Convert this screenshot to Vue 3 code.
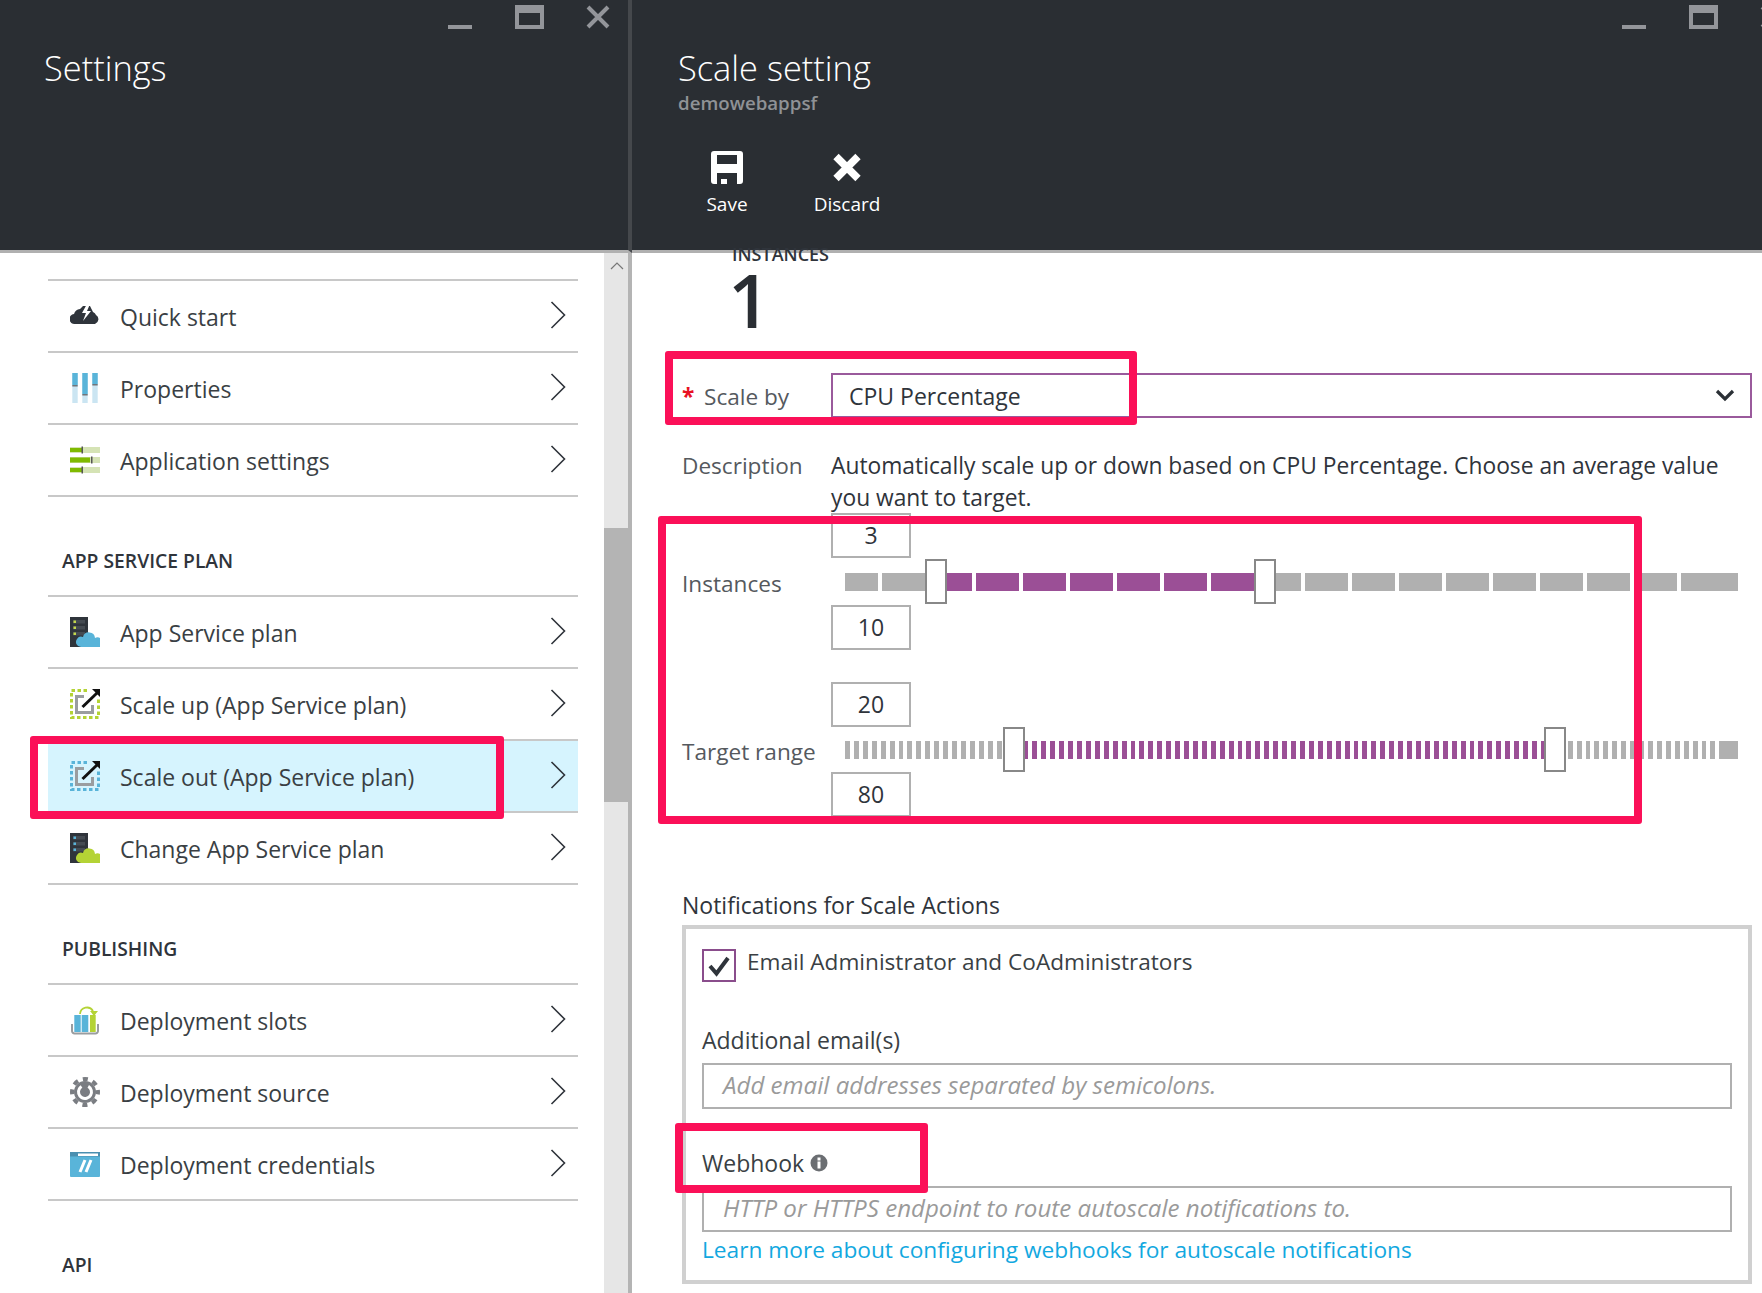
<template>
  <div class="page">
    <section class="blade settings">
      <header class="head">
        <div class="win-controls">
          <svg class="win-min" width="24" height="4"><rect width="24" height="4" fill="#93959a" /></svg>
          <svg class="win-max" width="29" height="24"><path d="M0 0h29v24H0z M4 8v12h21V8z" fill="#93959a" fill-rule="evenodd" /></svg>
          <svg class="win-close" width="24" height="24"><path d="M2 2l20 20M22 2L2 22" stroke="#93959a" stroke-width="4" /></svg>
        </div>
        <h1 class="title">Settings</h1>
      </header>
      <div class="settings-body">
        <div class="menu">
          <template v-for="group in groups" :key="group.title">
            <div v-if="group.title" class="menu-title">{{ group.title }}</div>
            <div class="menu-group">
              <div v-for="row in group.rows" :key="row.label" class="menu-row" :class="{ selected: row.selected }">
                <svg class="menu-icon" width="30" height="30" viewBox="0 0 30 30">
                  <template v-if="row.icon === 'quick'">
                    <path d="M5 23a5 5 0 0 1-1-10 7 7 0 0 1 6-5l3-3h7l3 6a5 5 0 0 1 3 3 5 5 0 0 1-1 9z" fill="#2f343b" />
                    <path d="M17 3l-5 9h4l-3 8 8-10h-4l3-7z" fill="#fff" />
                  </template>
                  <template v-else-if="row.icon === 'props'">
                    <rect x="2.300" width="5.400" height="30" fill="#cbe5f2" /><rect x="12.300" width="5.400" height="30" fill="#cbe5f2" /><rect x="22.300" width="5.400" height="30" fill="#cbe5f2" />
                    <rect x="2.300" width="5.400" height="12" fill="#59b4d9" /><rect x="12.300" width="5.400" height="21" fill="#59b4d9" /><rect x="22.300" width="5.400" height="11" fill="#59b4d9" />
                    <rect x="2.300" y="12" width="5.400" height="1.500" fill="#6f757b" /><rect x="12.300" y="21" width="5.400" height="1.500" fill="#6f757b" /><rect x="22.300" y="11" width="5.400" height="1.500" fill="#6f757b" />
                  </template>
                  <template v-else-if="row.icon === 'app'">
                    <rect y="2" width="30" height="6" fill="#d5e3b5" /><rect y="12" width="30" height="6" fill="#d5e3b5" /><rect y="22" width="30" height="6" fill="#d5e3b5" />
                    <rect y="3" width="12" height="4" fill="#7fba00" /><rect y="12.500" width="20" height="5" fill="#7fba00" /><rect y="23" width="12" height="4" fill="#7fba00" />
                    <rect x="11.500" y="1.500" width="1.500" height="7" fill="#555" /><rect x="21" y="11.500" width="1.500" height="7" fill="#555" /><rect x="11.500" y="21.500" width="1.500" height="7" fill="#555" />
                  </template>
                  <template v-else-if="row.icon === 'plan' || row.icon === 'change'">
                    <rect width="18" height="30" fill="#2f343b" />
                    <rect x="3" y="3" width="12" height="3.500" fill="#454b52" /><rect x="3" y="9" width="12" height="3.500" fill="#454b52" /><rect x="3" y="15" width="12" height="3.500" fill="#454b52" />
                    <rect x="3.500" y="3.500" width="2.500" height="2.500" :fill="row.icon === 'plan' ? '#c3d84a' : '#59b4d9'" /><rect x="3.500" y="9.500" width="2.500" height="2.500" :fill="row.icon === 'plan' ? '#c3d84a' : '#59b4d9'" /><rect x="3.500" y="15.500" width="2.500" height="2.500" :fill="row.icon === 'plan' ? '#c3d84a' : '#59b4d9'" />
                    <path d="M11 30a5 5 0 0 1-4-8 5 5 0 0 1 6-2 6.100 6.100 0 0 1 12 1 5 5 0 0 1 5 9z" :fill="row.icon === 'plan' ? '#59b4d9' : '#b4d335'" />
                  </template>
                  <template v-else-if="row.icon === 'scaleup' || row.icon === 'scaleout'">
                    <rect x="1.500" y="1.500" width="27" height="27" fill="none" :stroke="row.icon === 'scaleup' ? '#b4d335' : '#59b4d9'" stroke-width="3" stroke-dasharray="3.500 2.500" />
                    <rect x="19" y="0" width="11" height="9" :fill="row.selected ? '#d6f4fe' : '#fff'" />
                    <path d="M14 7.500H6.500v16h16V16" fill="none" stroke="#9a9da0" stroke-width="3" />
                    <path d="M12.500 18L27 4" stroke="#111" stroke-width="3" />
                    <path d="M22 0h8v8z" fill="#111" />
                  </template>
                  <template v-else-if="row.icon === 'slots'">
                    <path d="M2 19v7a2.500 2.500 0 0 0 2.500 2.500h21A2.500 2.500 0 0 0 28 26v-7" fill="none" stroke="#9a9da0" stroke-width="2" />
                    <rect x="4.300" y="10" width="6.400" height="17" fill="#59b4d9" /><rect x="11.700" y="10" width="6.600" height="17" fill="#59b4d9" /><rect x="20" y="10" width="5.700" height="17" fill="#b4d335" />
                    <path d="M10 9a7 7 0 0 1 13-3" fill="none" stroke="#b4d335" stroke-width="1.800" /><path d="M20 6h8l-4 5z" fill="#b4d335" />
                  </template>
                  <template v-else-if="row.icon === 'source'">
                    <circle cx="15" cy="15" r="11" fill="#7a7d82" />
                    <circle cx="15" cy="15" r="13" fill="none" stroke="#7a7d82" stroke-width="4" stroke-dasharray="5.100 5.100" stroke-dashoffset="2.550" />
                    <circle cx="15" cy="15" r="6.500" fill="none" stroke="#fff" stroke-width="3" stroke-dasharray="33 7.800" transform="rotate(-60 15 15)" />
                  </template>
                  <template v-else>
                    <rect y="3" width="30" height="25" rx="1" fill="#59b4d9" />
                    <rect y="3" width="30" height="4.500" fill="#4a8fb0" />
                    <rect x="8" y="4.500" width="20" height="2.500" fill="#fff" />
                    <path d="M10 23l5-12M16 23l5-12" stroke="#fff" stroke-width="3" />
                  </template>
                </svg>
                <span class="menu-label">{{ row.label }}</span>
                <svg class="chevron" width="16" height="28"><path d="M1.500 1l13 13-13 13" fill="none" stroke="#2f343b" stroke-width="1.600" /></svg>
              </div>
            </div>
          </template>
        </div>
        <div class="scrollbar">
          <svg class="scroll-up" width="14" height="8"><path d="M1 7l6-6 6 6" fill="none" stroke="#777" stroke-width="1.200" /></svg>
          <div class="scroll-thumb"></div>
        </div>
      </div>
    </section>

    <section class="blade scale">
      <header class="head">
        <div class="win-controls scale-controls">
          <svg class="win-min" width="24" height="4"><rect width="24" height="4" fill="#93959a" /></svg>
          <svg class="win-max" width="29" height="24"><path d="M0 0h29v24H0z M4 8v12h21V8z" fill="#93959a" fill-rule="evenodd" /></svg>
          <svg class="win-close" width="24" height="24"><path d="M2 2l20 20M22 2L2 22" stroke="#93959a" stroke-width="4" /></svg>
        </div>
        <h1 class="title">Scale setting</h1>
        <div class="subtitle">demowebappsf</div>
        <div class="toolbar">
          <div class="tool">
            <svg width="32" height="33" viewBox="0 0 32 33"><path d="M3 0h26a3 3 0 0 1 3 3v27a3 3 0 0 1-3 3H3a3 3 0 0 1-3-3V3a3 3 0 0 1 3-3z M6 4v9h20V4z M6 22v11h4v-5h6v5h10V22z" fill="#fff" fill-rule="evenodd" /></svg>
            <span>Save</span>
          </div>
          <div class="tool">
            <svg width="28" height="35" viewBox="0 -3.500 28 35"><path d="M3 3l22 22M25 3L3 25" stroke="#fff" stroke-width="7.500" /></svg>
            <span>Discard</span>
          </div>
        </div>
      </header>

      <div class="scale-body">
        <div class="stat">
          <div class="stat-label">INSTANCES</div>
          <div class="stat-value">1</div>
        </div>

        <div class="form-row scale-by">
          <label class="form-label"><span class="required">*</span>Scale by</label>
          <div class="select">
            <span>CPU Percentage</span>
            <svg width="20" height="13"><path d="M2 2l8 8 8-8" fill="none" stroke="#2b3036" stroke-width="3.200" /></svg>
          </div>
        </div>

        <div class="form-row description">
          <label class="form-label">Description</label>
          <p>Automatically scale up or down based on CPU Percentage. Choose an average value you want to target.</p>
        </div>

        <div v-for="slider in sliders" :key="slider.label" class="form-row slider-row" :class="slider.cls">
          <label class="form-label">{{ slider.label }}</label>
          <div class="slider">
            <div class="num">{{ slider.low }}</div>
            <div class="track-wrap">
              <div class="track">
                <div v-for="(seg, i) in slider.segments" :key="i" class="seg" :class="{ on: seg.on }" :style="{ width: seg.width + 'px' }"></div>
              </div>
              <div class="thumb" :style="{ left: slider.from + 'px' }"></div>
              <div class="thumb" :style="{ left: slider.to + 'px' }"></div>
            </div>
            <div class="num">{{ slider.high }}</div>
          </div>
        </div>

        <div class="notify-title">Notifications for Scale Actions</div>
        <div class="notify">
          <div class="check-row">
            <span class="check">
              <svg width="24" height="22"><path d="M3 11l6.500 7.500L21 3" fill="none" stroke="#2f343b" stroke-width="4" /></svg>
            </span>
            <span>Email Administrator and CoAdministrators</span>
          </div>
          <div class="field-label first">Additional email(s)</div>
          <div class="text-input">Add email addresses separated by semicolons.</div>
          <div class="field-label webhook">
            Webhook
            <svg class="info" width="18" height="18"><circle cx="9" cy="9" r="8.500" fill="#6b6e72" /><rect x="7.500" y="7.500" width="3" height="7" fill="#fff" /><rect x="7.500" y="3.500" width="3" height="3" fill="#fff" /></svg>
          </div>
          <div class="text-input">HTTP or HTTPS endpoint to route autoscale notifications to.</div>
          <a class="learn">Learn more about configuring webhooks for autoscale notifications</a>
        </div>
      </div>
    </section>

    <!-- red annotations drawn over the screenshot -->
    <div class="mark mark-row"></div>
    <div class="mark mark-scaleby"></div>
    <div class="mark mark-sliders"></div>
    <div class="mark mark-webhook"></div>
  </div>
</template>

<script setup>
const groups = [
  {
    title: '',
    rows: [
      { label: 'Quick start', icon: 'quick' },
      { label: 'Properties', icon: 'props' },
      { label: 'Application settings', icon: 'app' },
    ],
  },
  {
    title: 'APP SERVICE PLAN',
    rows: [
      { label: 'App Service plan', icon: 'plan' },
      { label: 'Scale up (App Service plan)', icon: 'scaleup' },
      { label: 'Scale out (App Service plan)', icon: 'scaleout', selected: true },
      { label: 'Change App Service plan', icon: 'change' },
    ],
  },
  {
    title: 'PUBLISHING',
    rows: [
      { label: 'Deployment slots', icon: 'slots' },
      { label: 'Deployment source', icon: 'source' },
      { label: 'Deployment credentials', icon: 'cred' },
    ],
  },
  {
    title: 'API',
    rows: [],
  },
]

// track starts at x=845, so thumbs are given relative to it
const coarse = () => {
  const segs = []
  for (let i = 0; i < 19; i++) {
    let width = 43
    if (i === 0) width = 33
    if (i === 18) width = 57
    segs.push({ width, on: i >= 2 && i <= 8 })
  }
  return segs
}

const fine = () => {
  const segs = []
  for (let i = 0; i < 99; i++) {
    const start = i * 8.93
    segs.push({ width: i === 98 ? 19 : 4.93, on: start > 170 && start < 700 })
  }
  return segs
}

const sliders = [
  { label: 'Instances', low: 3, high: 10, from: 80, to: 409, segments: coarse(), cls: 'instances' },
  { label: 'Target range', low: 20, high: 80, from: 158, to: 699, segments: fine(), cls: 'target' },
]
</script>

<style scoped>
.page {
  position: relative;
  width: 1762px;
  height: 1293px;
  overflow: hidden;
  display: flex;
  background: #fff;
  color: #3a3f44;
  font-family: "Open Sans", "Liberation Sans", sans-serif;
}

.blade {
  height: 100%;
  overflow: hidden;
  display: flex;
  flex-direction: column;
}

.settings {
  width: 632px;
}

.scale {
  width: 1130px;
}

.head {
  flex: none;
  box-sizing: border-box;
  height: 253px;
  background: #2a2e33;
  border-bottom: 3px solid #b0b0b0;
  color: #fff;
}

.settings .head {
  padding: 5px 0 0 44px;
  border-right: 4px solid #45484c;
}

.scale .head {
  padding: 5px 0 0 46px;
}

.win-controls {
  display: flex;
  justify-content: flex-end;
  align-items: flex-end;
  height: 24px;
  padding-right: 18px;
}

.scale-controls {
  padding-right: 0;
  margin-right: -22px;
}

.win-min {
  display: block;
  margin-right: 43px;
}

.win-max {
  margin-right: 42px;
}

.title {
  margin: 17px 0 0;
  font-size: 34.4px;
  font-weight: 300;
  line-height: 44px;
}

.subtitle {
  font-size: 18.7px;
  line-height: 26px;
  font-weight: 600;
  color: #8f9296;
}

.toolbar {
  display: flex;
  margin: 34px 0 0 -11px;
}

.tool {
  width: 120px;
  height: 67px;
  display: flex;
  flex-direction: column;
  align-items: center;
  font-size: 19px;
  line-height: 26px;
}

.tool svg {
  height: 35px;
  margin-bottom: 6px;
}

.settings-body {
  flex: 1;
  display: flex;
  min-height: 0;
  border-right: 4px solid #b4b4b4;
}

.menu {
  box-sizing: border-box;
  width: 604px;
  padding: 26px 26px 0 48px;
}

.menu-title {
  box-sizing: border-box;
  height: 98px;
  display: flex;
  align-items: center;
  padding: 28px 0 0 14px;
  font-size: 19.3px;
  font-weight: 600;
  color: #2f343b;
}

.menu-group {
  border-top: 2px solid #c8c8c8;
}

.menu-row {
  box-sizing: border-box;
  height: 72px;
  display: flex;
  align-items: center;
  padding: 0 12px 0 22px;
  border-bottom: 2px solid #c8c8c8;
}

.menu-row.selected {
  background: #d6f4fe;
}

.menu-label {
  flex: 1;
  margin-left: 20px;
  padding-top: 2px;
  font-size: 23px;
}

.chevron {
  margin-top: -2px;
}

.scrollbar {
  position: relative;
  width: 24px;
  background: #e6e6e6;
}

.scroll-up {
  position: absolute;
  left: 6px;
  top: 9px;
}

.scroll-thumb {
  margin-top: 275px;
  height: 274px;
  background: #b4b4b4;
}

.scale-body {
  flex: 1;
  padding-left: 50px;
  min-height: 0;
}

.stat {
  margin: -9px 0 0 50px;
}

.stat-label {
  font-size: 18px;
  line-height: 20px;
  font-weight: 600;
  color: #2f343b;
}

.stat-value {
  height: 80px;
  margin: -4px 0 0 -4px;
  font-size: 74px;
  line-height: 80px;
  font-weight: 600;
  color: #2a2e33;
}

.form-row {
  display: grid;
  grid-template-columns: 149px 1fr;
  width: 1070px;
}

.form-label {
  font-size: 22.6px;
  line-height: 32px;
  color: #55595e;
}

.scale-by {
  margin-top: 33px;
  align-items: center;
}

.scale-by .form-label {
  padding-top: 2px;
}

.required {
  display: inline-block;
  width: 22px;
  color: #e81123;
  font-weight: 700;
}

.select {
  box-sizing: border-box;
  height: 45px;
  display: flex;
  align-items: center;
  justify-content: space-between;
  padding: 0 15px 0 16px;
  border: 2px solid #9a5a9c;
  font-size: 23px;
  color: #2f343b;
}

.description {
  margin-top: 32px;
}

.description p {
  margin: 0;
  font-size: 22.8px;
  line-height: 32px;
  color: #2f343b;
}

.slider-row {
  align-items: center;
}

.slider-row .form-label {
  padding-top: 5px;
}

.instances {
  margin-top: -1px;
}

.instances .slider {
  gap: 1px;
}

.target {
  margin-top: 32px;
}

.slider {
  display: flex;
  flex-direction: column;
  align-items: flex-start;
}

.num {
  box-sizing: border-box;
  width: 80px;
  height: 45px;
  border: 2px solid #b0b0b0;
  text-align: center;
  font-size: 23px;
  line-height: 40px;
  color: #2f343b;
  background: #fff;
}

.track-wrap {
  position: relative;
  width: 893px;
  height: 45px;
  margin-left: 14px;
  display: flex;
  align-items: center;
}

.track {
  display: flex;
  gap: 4px;
  height: 18px;
}

.seg {
  flex: none;
  height: 100%;
  background: #b0b0b0;
}

.seg.on {
  background: #9b4f96;
}

.thumb {
  position: absolute;
  top: 0;
  box-sizing: border-box;
  width: 22px;
  height: 45px;
  background: #fff;
  border: 2px solid #888;
}

.notify-title {
  margin-top: 72px;
  font-size: 23px;
  line-height: 32px;
  color: #2f343b;
}

.notify {
  box-sizing: border-box;
  width: 1070px;
  height: 359px;
  margin-top: 4px;
  padding: 20px 16px 0;
  border: 4px solid #d0d0d0;
}

.check-row {
  display: flex;
  align-items: flex-start;
  gap: 11px;
  height: 33px;
  font-size: 22.6px;
  line-height: 26px;
}

.check {
  box-sizing: border-box;
  width: 34px;
  height: 33px;
  display: flex;
  align-items: center;
  justify-content: center;
  border: 2px solid #8a4d8c;
}

.field-label {
  font-size: 23px;
  line-height: 32px;
}

.field-label.first {
  margin: 42px 0 7px;
}

.field-label.webhook {
  display: flex;
  align-items: center;
  gap: 6px;
  margin: 38px 0 7px;
}

.text-input {
  box-sizing: border-box;
  height: 46px;
  padding-left: 19px;
  border: 2px solid #b0b0b0;
  font-size: 24.1px;
  font-style: italic;
  line-height: 40px;
  color: #9a9a9a;
}

.learn {
  display: block;
  margin-top: 2px;
  font-size: 22.7px;
  line-height: 32px;
  color: #12a8e0;
}

.mark {
  position: absolute;
  box-sizing: border-box;
  border: 8px solid #fb1058;
  border-radius: 3px;
}

.mark-row {
  left: 30px;
  top: 736px;
  width: 474px;
  height: 83px;
}

.mark-scaleby {
  left: 665px;
  top: 351px;
  width: 472px;
  height: 74px;
}

.mark-sliders {
  left: 658px;
  top: 516px;
  width: 984px;
  height: 308px;
}

.mark-webhook {
  left: 675px;
  top: 1123px;
  width: 253px;
  height: 70px;
}
</style>
